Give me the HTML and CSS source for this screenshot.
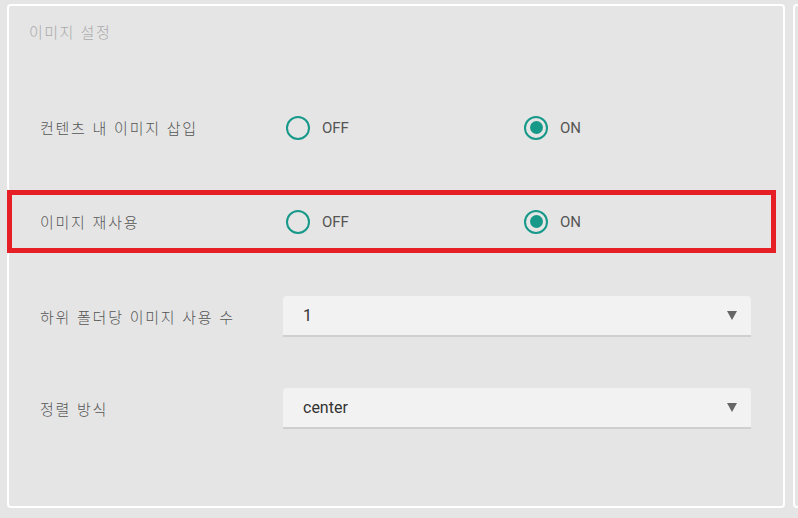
FILE: index.html
```html
<!DOCTYPE html>
<html lang="ko">
<head>
<meta charset="utf-8">
<title>이미지 설정</title>
<link rel="stylesheet" href="styles.css">
</head>
<body>
<div class="page">
  <section class="panel">
    <h2 class="panel-title">이미지 설정</h2>
    <div class="rows">
      <div class="row">
        <div class="label">컨텐츠 내 이미지 삽입</div>
        <div class="radios">
          <label class="option"><span class="radio"></span><span class="opt-text">OFF</span></label>
          <label class="option"><span class="radio checked"></span><span class="opt-text">ON</span></label>
        </div>
      </div>
      <div class="row highlight">
        <div class="label">이미지 재사용</div>
        <div class="radios">
          <label class="option"><span class="radio"></span><span class="opt-text">OFF</span></label>
          <label class="option"><span class="radio checked"></span><span class="opt-text">ON</span></label>
        </div>
      </div>
      <div class="row row-select-first">
        <div class="label">하위 폴더당 이미지 사용 수</div>
        <div class="select"><span class="select-value">1</span><span class="caret"></span></div>
      </div>
      <div class="row row-select-last">
        <div class="label">정렬 방식</div>
        <div class="select"><span class="select-value">center</span><span class="caret"></span></div>
      </div>
    </div>
  </section>
  <section class="panel panel-next"></section>
</div>
</body>
</html>
```

FILE: styles.css
```css
* { box-sizing: border-box; }
html, body {
  margin: 0;
  padding: 0;
  background: #e5e5e5;
  font-family: Roboto, "Noto Sans CJK KR", "Noto Sans", sans-serif;
  overflow: hidden;
}
.page {
  display: flex;
  align-items: flex-start;
  padding: 4px 0 0 7px;
  width: 798px;
  height: 518px;
}
.panel {
  flex: 0 0 auto;
  width: 778px;
  height: 504px;
  border: 2px solid #ffffff;
  border-radius: 4px;
  background: #e5e5e5;
}
.panel-next {
  width: 40px;
  margin-left: 8px;
}
.panel-title {
  margin: 0;
  padding: 16px 0 0 20px;
  font-size: 15px;
  line-height: 20px;
  font-weight: 300;
  letter-spacing: 1.5px;
  color: #aaaaaa;
  font-family: "Noto Sans CJK KR", sans-serif;
}
.rows {
  display: flex;
  flex-direction: column;
  margin: 54px 0 0 -2px;
}
.row {
  display: flex;
  align-items: center;
  width: 769px;
  height: 63px;
  border: 5px solid transparent;
  padding-left: 28px;
}
.row.highlight {
  margin-top: 31px;
  border-color: #e61e25;
}
.row.row-select-first { margin-top: 32px; }
.row.row-select-last { margin-top: 29px; }
.label {
  flex: 0 0 243px;
  font-family: "Noto Sans CJK KR", sans-serif;
  font-size: 15px;
  font-weight: 300;
  letter-spacing: 1.75px;
  color: #555555;
}
.radios {
  display: flex;
  align-items: center;
}
.option {
  display: flex;
  align-items: center;
  width: 238px;
}
.radio {
  width: 24px;
  height: 24px;
  margin-left: 3px;
  border: 2px solid #17998a;
  border-radius: 50%;
  display: flex;
  align-items: center;
  justify-content: center;
}
.radio.checked::after {
  content: "";
  width: 13px;
  height: 13px;
  border-radius: 50%;
  background: #17998a;
}
.opt-text {
  margin-left: 12px;
  font-size: 15px;
  color: #555555;
}
.select {
  display: flex;
  align-items: center;
  justify-content: space-between;
  width: 468px;
  height: 41px;
  background: #f2f2f2;
  border-bottom: 2px solid #cfcfcf;
  border-radius: 4px 4px 0 0;
  padding: 0 14px 0 20px;
}
.select-value {
  font-size: 16px;
  color: #333333;
}
.caret {
  width: 0;
  height: 0;
  border-left: 5.5px solid transparent;
  border-right: 5.5px solid transparent;
  border-top: 9px solid #666666;
}
```
